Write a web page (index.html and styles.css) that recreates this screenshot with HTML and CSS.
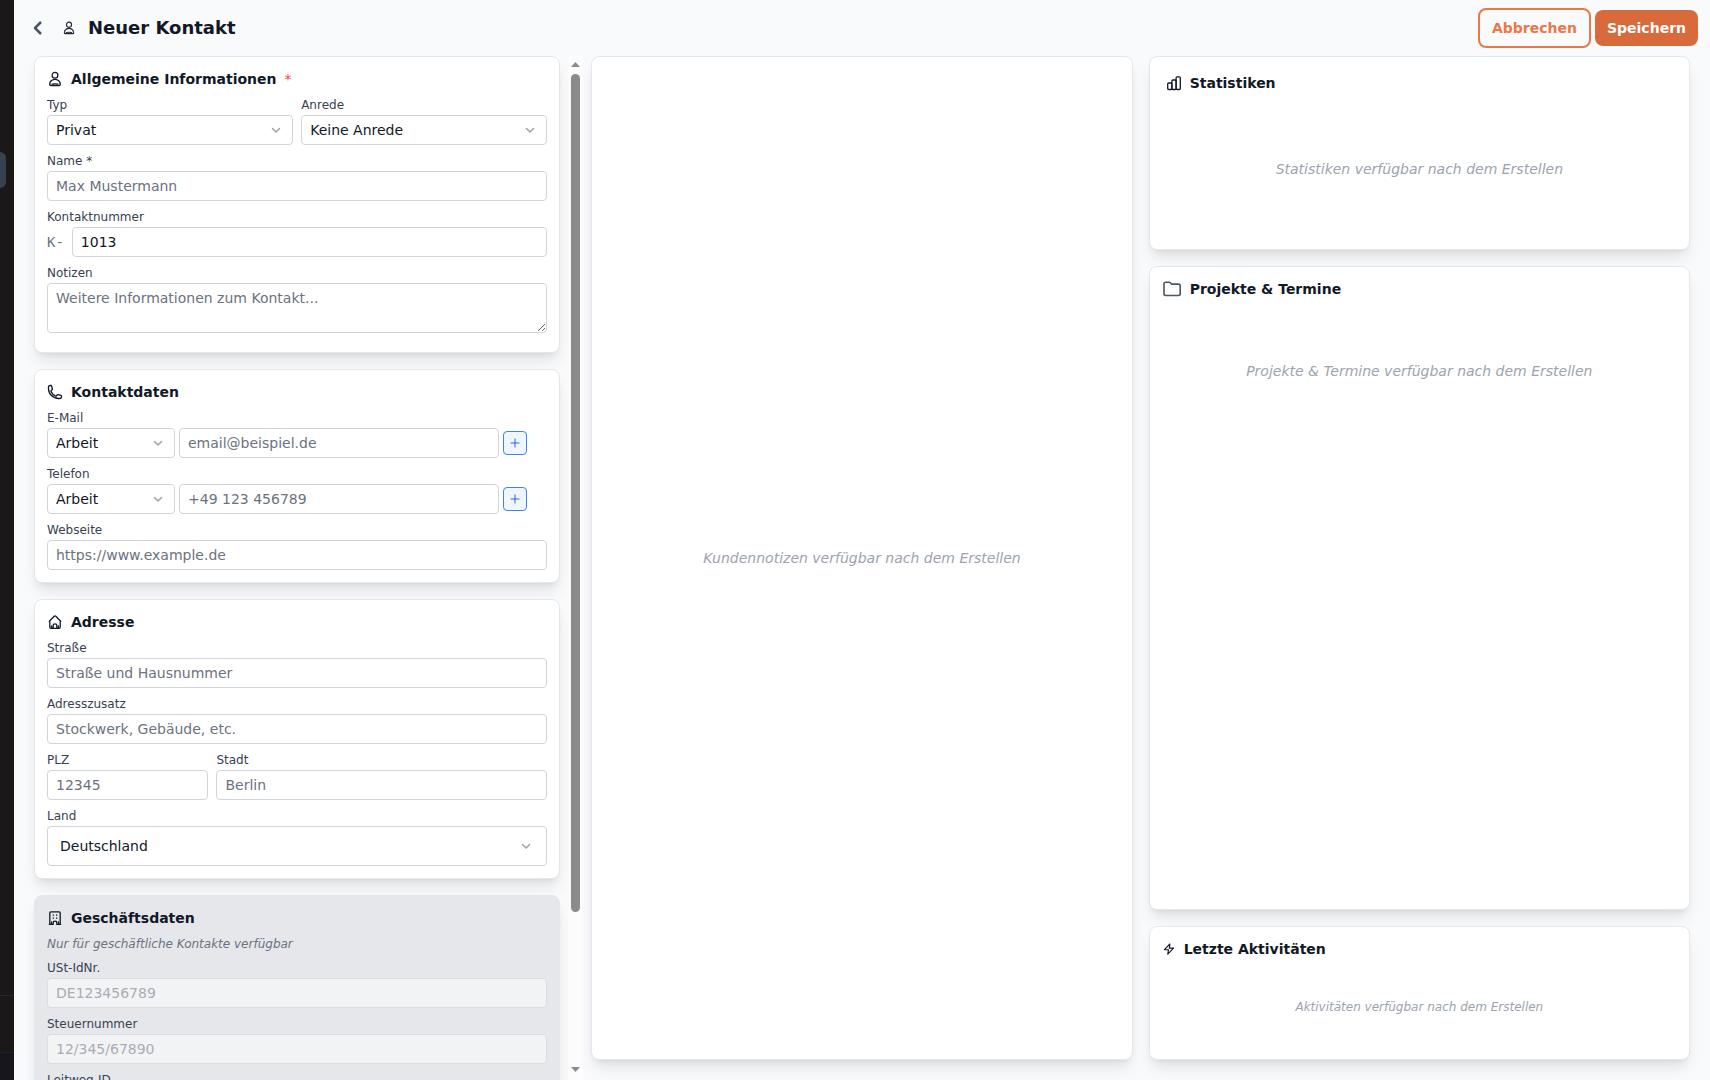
FILE: index.html
```html
<!DOCTYPE html>
<html lang="de">
<head>
    <meta charset="utf-8"/>
    <title>Neuer Kontakt</title>
    <link rel="stylesheet" href="styles.css">
</head>
<body>
<svg class="sprite" aria-hidden="true">
    <symbol id="icon-user" viewBox="0 0 16 16">
        <circle cx="8" cy="4.2" r="2.9"/>
        <path d="M5.4 9C3.9 9.7 2.7 11.6 2.7 13.3c0 .8.4 1.2 1.2 1.2h8.2c.8 0 1.2-.4 1.2-1.2 0-1.7-1.2-3.6-2.7-4.3-1.6-.7-3.6-.7-5.2 0z"/>
        <path d="M5 13.2q3-.8 6 0"/>
    </symbol>
    <symbol id="icon-phone" viewBox="0 0 24 24">
        <path d="M2.25 6.75c0 8.28 6.72 15 15 15h2.25a2.25 2.25 0 0 0 2.25-2.25v-1.37c0-.52-.35-.97-.85-1.09l-4.42-1.11c-.44-.11-.9.06-1.17.42l-.97 1.29c-.28.38-.77.54-1.21.38a12 12 0 0 1-7.14-7.14c-.16-.44 0-.93.38-1.21l1.29-.97c.36-.27.53-.73.42-1.17L6.96 3.1a1.13 1.13 0 0 0-1.09-.85H4.5A2.25 2.25 0 0 0 2.25 4.5z"/>
    </symbol>
    <symbol id="icon-home" viewBox="0 0 16 16">
        <path d="M2.3 7.2 7.2 2.2q.8-.7 1.6 0l4.9 5M2.8 8v5.300q0 1 1 1h8.400q1 0 1-1V8"/>
        <path d="M6.200 14v-3q0-1.200 1.800-1.200T9.800 11v3M4.600 12v2M11.400 12v2"/>
    </symbol>
    <symbol id="icon-building" viewBox="0 0 16 16">
        <path d="M2.800 14V2.900q0-1.100 1.100-1.100h8.200q1.100 0 1.100 1.100V14M2.300 14.300h3.900v-2q0-1.200 1.800-1.200t1.800 1.200v2h3.900"/>
        <path d="M6.300 5v.2M9.700 5v.2M6.300 8v.2M9.700 8v.2M4.500 12v2M11.500 12v2"/>
    </symbol>
    <symbol id="icon-chart" viewBox="0 0 16 16">
        <rect x="1.700" y="8" width="4.200" height="6.500" rx="1"/>
        <rect x="5.900" y="5" width="4.200" height="9.500" rx="1"/>
        <rect x="10.100" y="1.800" width="4.200" height="12.700" rx="1"/>
    </symbol>
    <symbol id="icon-folder" viewBox="0 0 20 20">
        <path d="M2 14.800V5q0-1.700 1.700-1.700h3.600q.6 0 1 .4l1.200 1.400h7q1.700 0 1.700 1.700v8q0 1.700-1.700 1.700H3.700q-1.700 0-1.700-1.700z"/>
    </symbol>
    <symbol id="icon-bolt" viewBox="0 0 16 16">
        <path d="M9 2.300 2.800 8.800h4.600L6.600 13.800 13.200 7H8.400z"/>
    </symbol>
    <symbol id="icon-chevron" viewBox="0 0 12 12">
        <path d="M2.500 4.500 6 8l3.500-3.500"/>
    </symbol>
</svg>

<div class="app">
    <aside class="sidebar">
        <div class="sidebar-active"></div>
        <div class="sidebar-section"></div>
        <div class="sidebar-footer"></div>
    </aside>

    <form class="page">
        <header class="page-header">
            <button class="back" type="button" aria-label="Zurück">
                <svg viewBox="0 0 12 16"><path d="M9 2 3 8l6 6"/></svg>
            </button>
            <svg class="icon icon-header"><use href="#icon-user"/></svg>
            <h1>Neuer Kontakt</h1>
            <div class="actions">
                <button class="btn btn-outline" type="button">Abbrechen</button>
                <button class="btn btn-primary" type="submit">Speichern</button>
            </div>
        </header>

        <main class="columns">
            <div class="form-column">
                <div class="form-cards">
                    <section class="card">
                        <h2><svg class="icon"><use href="#icon-user"/></svg>Allgemeine Informationen <span class="required">*</span></h2>
                        <div class="row row-half">
                            <div class="field">
                                <label for="typ">Typ</label>
                                <div class="select">
                                    <select id="typ"><option>Privat</option></select>
                                    <svg class="chevron"><use href="#icon-chevron"/></svg>
                                </div>
                            </div>
                            <div class="field">
                                <label for="anrede">Anrede</label>
                                <div class="select">
                                    <select id="anrede"><option>Keine Anrede</option></select>
                                    <svg class="chevron"><use href="#icon-chevron"/></svg>
                                </div>
                            </div>
                        </div>
                        <div class="field">
                            <label for="name">Name *</label>
                            <input id="name" type="text" placeholder="Max Mustermann">
                        </div>
                        <div class="field">
                            <label for="nummer">Kontaktnummer</label>
                            <div class="prefixed">
                                <span class="prefix">K-</span>
                                <input id="nummer" type="text" value="1013">
                            </div>
                        </div>
                        <div class="field field-notes">
                            <label for="notizen">Notizen</label>
                            <textarea id="notizen" placeholder="Weitere Informationen zum Kontakt..."></textarea>
                        </div>
                    </section>

                    <section class="card">
                        <h2><svg class="icon"><use href="#icon-phone"/></svg>Kontaktdaten</h2>
                        <div class="field">
                            <label for="email">E-Mail</label>
                            <div class="multi">
                                <div class="select">
                                    <select aria-label="E-Mail Art"><option>Arbeit</option></select>
                                    <svg class="chevron"><use href="#icon-chevron"/></svg>
                                </div>
                                <input id="email" type="email" placeholder="email@beispiel.de">
                                <button class="add" type="button" aria-label="E-Mail hinzufügen"><svg viewBox="0 0 12 12"><path d="M6 2v8M2 6h8"/></svg></button>
                            </div>
                        </div>
                        <div class="field">
                            <label for="telefon">Telefon</label>
                            <div class="multi">
                                <div class="select">
                                    <select aria-label="Telefon Art"><option>Arbeit</option></select>
                                    <svg class="chevron"><use href="#icon-chevron"/></svg>
                                </div>
                                <input id="telefon" type="tel" placeholder="+49 123 456789">
                                <button class="add" type="button" aria-label="Telefon hinzufügen"><svg viewBox="0 0 12 12"><path d="M6 2v8M2 6h8"/></svg></button>
                            </div>
                        </div>
                        <div class="field">
                            <label for="webseite">Webseite</label>
                            <input id="webseite" type="url" placeholder="https://www.example.de">
                        </div>
                    </section>

                    <section class="card">
                        <h2><svg class="icon"><use href="#icon-home"/></svg>Adresse</h2>
                        <div class="field">
                            <label for="strasse">Straße</label>
                            <input id="strasse" type="text" placeholder="Straße und Hausnummer">
                        </div>
                        <div class="field">
                            <label for="zusatz">Adresszusatz</label>
                            <input id="zusatz" type="text" placeholder="Stockwerk, Gebäude, etc.">
                        </div>
                        <div class="row row-third">
                            <div class="field">
                                <label for="plz">PLZ</label>
                                <input id="plz" type="text" placeholder="12345">
                            </div>
                            <div class="field field-wide">
                                <label for="stadt">Stadt</label>
                                <input id="stadt" type="text" placeholder="Berlin">
                            </div>
                        </div>
                        <div class="field">
                            <label for="land">Land</label>
                            <div class="select select-large">
                                <select id="land"><option>Deutschland</option></select>
                                <svg class="chevron"><use href="#icon-chevron"/></svg>
                            </div>
                        </div>
                    </section>

                    <section class="card card-disabled">
                        <h2><svg class="icon"><use href="#icon-building"/></svg>Geschäftsdaten</h2>
                        <p class="hint">Nur für geschäftliche Kontakte verfügbar</p>
                        <div class="field">
                            <label for="ustid">USt-IdNr.</label>
                            <input id="ustid" type="text" placeholder="DE123456789" disabled>
                        </div>
                        <div class="field">
                            <label for="steuer">Steuernummer</label>
                            <input id="steuer" type="text" placeholder="12/345/67890" disabled>
                        </div>
                        <div class="field">
                            <label for="leitweg">Leitweg-ID</label>
                            <input id="leitweg" type="text" disabled>
                        </div>
                    </section>
                </div>
                <div class="scrollbar" aria-hidden="true">
                    <svg class="scroll-arrow" viewBox="0 0 9 5"><path d="M0 5 4.500 0 9 5z"/></svg>
                    <div class="scroll-track"><div class="scroll-thumb"></div></div>
                    <svg class="scroll-arrow" viewBox="0 0 9 5"><path d="M0 0h9L4.500 5z"/></svg>
                </div>
            </div>

            <section class="card card-notes">
                <p class="empty">Kundennotizen verfügbar nach dem Erstellen</p>
            </section>

            <div class="info-column">
                <section class="card card-stats">
                    <h2><svg class="icon"><use href="#icon-chart"/></svg>Statistiken</h2>
                    <p class="empty">Statistiken verfügbar nach dem Erstellen</p>
                </section>
                <section class="card card-projects">
                    <h2><svg class="icon icon-large"><use href="#icon-folder"/></svg>Projekte &amp; Termine</h2>
                    <p class="empty">Projekte &amp; Termine verfügbar nach dem Erstellen</p>
                </section>
                <section class="card card-activity">
                    <h2><svg class="icon icon-small"><use href="#icon-bolt"/></svg>Letzte Aktivitäten</h2>
                    <p class="empty">Aktivitäten verfügbar nach dem Erstellen</p>
                </section>
            </div>
        </main>
    </form>
</div>
</body>
</html>
```

FILE: styles.css
```css
* {
    box-sizing: border-box;
}

body {
    margin: 0;
    background: #f9fafc;
    color: #111827;
    font-family: "DejaVu Sans", sans-serif;
    font-size: 14px;
    line-height: 20px;
}

h1, h2, p {
    margin: 0;
}

button, input, select, textarea {
    font: inherit;
    color: inherit;
}

svg {
    fill: none;
    stroke: currentColor;
    stroke-linecap: round;
    stroke-linejoin: round;
}

.sprite {
    position: absolute;
    width: 0;
    height: 0;
}

.app {
    display: flex;
    height: 100vh;
    overflow: hidden;
}

/* Sidebar */

.sidebar {
    display: flex;
    flex-direction: column;
    flex: none;
    width: 14px;
    padding-top: 152px;
    background: #1c1718;
}

.sidebar-active {
    width: 6px;
    height: 36px;
    border-radius: 0 6px 6px 0;
    background: #374151;
}

.sidebar-section {
    height: 57px;
    margin-top: auto;
    border-top: 1px solid #252a37;
}

.sidebar-footer {
    height: 28px;
    border-top: 1px solid #1b2130;
    background: #17161e;
}

/* Header */

.page {
    display: flex;
    flex-direction: column;
    flex: 1;
    min-width: 0;
}

.page-header {
    display: flex;
    align-items: center;
    flex: none;
    height: 56px;
    padding: 0 12px 0 16px;
}

.page-header h1 {
    margin-left: 12px;
    font-size: 18px;
    line-height: 28px;
}

.back {
    display: flex;
    justify-content: center;
    width: 16px;
    margin-right: 16px;
    padding: 0;
    border: 0;
    background: none;
    color: #4b5563;
}

.back svg {
    width: 12px;
    height: 16px;
    stroke-width: 2.5;
    stroke-linecap: butt;
}

.actions {
    display: flex;
    align-items: center;
    gap: 4px;
    margin-left: auto;
}

.btn {
    padding: 8px 12px;
    border: 0;
    border-radius: 8px;
    font-weight: bold;
}

.btn-outline {
    border: 2px solid #eb7748;
    background: transparent;
    color: #eb7748;
}

.btn-primary {
    background: #d86a3b;
    color: #fff;
}

/* Icons */

.icon {
    flex: none;
    width: 16px;
    height: 16px;
    stroke-width: 1.3;
}

.icon-header {
    width: 14px;
    height: 14px;
    color: #1f2937;
}

.icon-large {
    width: 20px;
    height: 20px;
    color: #4b5563;
    stroke-width: 1.6;
}

.icon-small {
    width: 14px;
    height: 14px;
}

#icon-phone {
    stroke-width: 2;
}

/* Columns */

.columns {
    display: grid;
    grid-template-columns: repeat(3, minmax(0, 1fr));
    gap: 16px;
    flex: 1;
    min-height: 0;
    padding: 0 20px;
}

.form-column {
    display: flex;
    min-height: 0;
    margin: 0 -8px;
}

.form-cards {
    display: flex;
    flex-direction: column;
    flex: 1;
    gap: 16px;
    min-width: 0;
    padding: 0 8px 134px;
    overflow-y: scroll;
    scrollbar-width: none;
}

.info-column {
    display: grid;
    grid-template-rows: 194px 1fr 134px;
    gap: 16px;
    margin-bottom: 20px;
}

/* Scrollbar of the form column */

.scrollbar {
    display: flex;
    flex-direction: column;
    flex: none;
    align-items: center;
    gap: 7px;
    width: 15px;
    padding: 6px 0 8px;
    background: #fcfcfc;
}

.scroll-arrow {
    width: 9px;
    height: 5px;
    fill: #8b8b8b;
    stroke: none;
}

.scroll-track {
    flex: 1;
    width: 9px;
}

.scroll-thumb {
    height: 85%;
    border-radius: 5px;
    background: #8b8b8b;
}

/* Cards */

.card {
    display: flex;
    flex-direction: column;
    flex: none;
    gap: 8px;
    padding: 12px;
    border: 1px solid #e5e7eb;
    border-radius: 8px;
    background: #fff;
    box-shadow: 0 10px 15px -3px rgba(0, 0, 0, 0.1), 0 4px 6px -4px rgba(0, 0, 0, 0.1);
}

.card h2 {
    display: flex;
    align-items: center;
    gap: 8px;
    font-size: 14px;
    line-height: 20px;
}

.card-disabled {
    background: #e5e7eb;
}

.card-notes {
    margin-bottom: 20px;
}

.card-stats {
    gap: 12px;
    padding: 16px;
}

.required {
    color: #ef4444;
    font-weight: normal;
}

.hint {
    color: #6b7280;
    font-size: 12px;
    font-style: italic;
    line-height: 16px;
}

.empty {
    display: flex;
    align-items: center;
    justify-content: center;
    flex: 1;
    color: #9ca3af;
    font-style: italic;
}

.card-projects .empty {
    align-items: flex-start;
    padding-top: 54px;
}

.card-activity .empty {
    font-size: 12px;
    line-height: 16px;
}

/* Fields */

.row {
    display: grid;
    gap: 8px;
}

.row-half {
    grid-template-columns: 1fr 1fr;
}

.row-third {
    grid-template-columns: repeat(3, minmax(0, 1fr));
}

.field {
    display: flex;
    flex-direction: column;
    gap: 2px;
}

.field-wide {
    grid-column: span 2;
}

.field-notes {
    padding-bottom: 7px;
}

label {
    color: #374151;
    font-size: 12px;
    line-height: 16px;
}

input, select, textarea {
    width: 100%;
    min-width: 0;
    height: 30px;
    padding: 4px 8px;
    border: 1px solid #d1d5db;
    border-radius: 4px;
    background: #fff;
}

textarea {
    display: block;
    height: 50px;
    resize: vertical;
}

select {
    appearance: none;
}

::placeholder {
    color: #6b7280;
    opacity: 1;
}

input:disabled {
    background: #fff;
    opacity: 0.5;
}

.select {
    position: relative;
}

.chevron {
    position: absolute;
    top: 0;
    right: 11px;
    bottom: 0;
    width: 12px;
    height: 12px;
    margin: auto 0;
    color: #9ca3af;
    stroke-width: 1.5;
    pointer-events: none;
}

.select-large select {
    height: 40px;
    padding: 8px 12px;
}

.select-large .chevron {
    right: 15px;
}

.prefixed {
    display: flex;
    align-items: center;
    gap: 8px;
}

.prefix {
    color: #6b7280;
    font-family: "DejaVu Sans Mono", monospace;
}

.multi {
    display: grid;
    grid-template-columns: 128px 1fr 44px;
    align-items: center;
    gap: 4px;
}

.add {
    display: flex;
    align-items: center;
    justify-content: center;
    width: 24px;
    height: 24px;
    padding: 0;
    border: 1px solid #3b82f6;
    border-radius: 4px;
    background: #eff6ff;
    color: #2563eb;
}

.add svg {
    width: 12px;
    height: 12px;
}
```
